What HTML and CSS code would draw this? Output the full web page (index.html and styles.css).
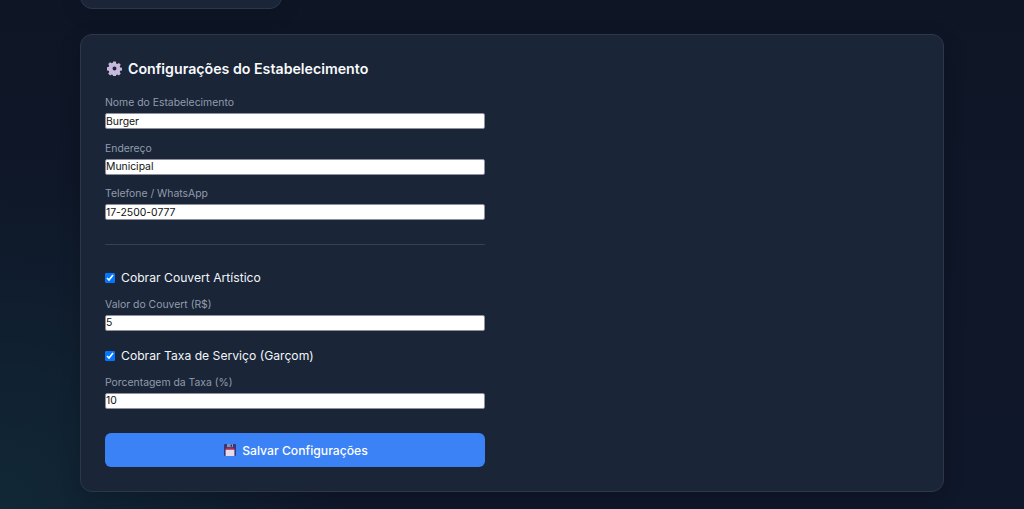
FILE: index.html
```html
<!DOCTYPE html>
<html lang="pt-BR">
<head>
    <meta charset="UTF-8">
    <meta name="viewport" content="width=device-width, initial-scale=1.0">
    <title>Configurações</title>
    <link rel="stylesheet" href="styles.css">
</head>
<body>
    <div class="container">
        <div class="card card-top"></div>

        <section class="card">
            <h2 class="card-title">
                <svg class="icon-gear" viewBox="0 0 16 16" aria-hidden="true">
                    <path fill-rule="evenodd" d="M6.6 0.6h2.8l0.4 2 1.2 0.5 1.7-1.1 2 2-1.1 1.7 0.5 1.2 2 0.4v2.8l-2 0.4-0.5 1.2 1.1 1.7-2 2-1.7-1.1-1.2 0.5-0.4 2H6.6l-0.4-2-1.2-0.5-1.7 1.1-2-2 1.1-1.7-0.5-1.2-2-0.4V6.6l2-0.4 0.5-1.2-1.1-1.7 2-2 1.7 1.1 1.2-0.5zM8 5.9a2.1 2.1 0 1 0 0 4.2 2.1 2.1 0 0 0 0-4.2z"/>
                </svg>
                Configurações do Estabelecimento
            </h2>

            <form class="settings-form">
                <div class="field">
                    <label>Nome do Estabelecimento</label>
                    <input type="text" value="Burger">
                </div>
                <div class="field">
                    <label>Endereço</label>
                    <input type="text" value="Municipal">
                </div>
                <div class="field">
                    <label>Telefone / WhatsApp</label>
                    <input type="text" value="17-2500-0777">
                </div>

                <hr class="divider">

                <label class="check-row">
                    <input type="checkbox" checked>
                    Cobrar Couvert Artístico
                </label>
                <div class="field">
                    <label>Valor do Couvert (R$)</label>
                    <input type="text" value="5">
                </div>

                <label class="check-row">
                    <input type="checkbox" checked>
                    Cobrar Taxa de Serviço (Garçom)
                </label>
                <div class="field">
                    <label>Porcentagem da Taxa (%)</label>
                    <input type="text" value="10">
                </div>

                <button type="button" class="save-button">
                    <svg class="icon-save" viewBox="0 0 12 12" aria-hidden="true">
                        <rect x="0" y="0" width="12" height="12" rx="1" fill="#3a3670"/>
                        <rect x="3" y="0" width="6" height="3.2" fill="#8f8cb8"/>
                        <rect x="6.6" y="0.6" width="1.4" height="2" fill="#2b2858"/>
                        <rect x="1.6" y="4.4" width="8.8" height="1.4" fill="#e0315a"/>
                        <rect x="1.6" y="5.8" width="8.8" height="6.2" fill="#e2dcec"/>
                    </svg>
                    Salvar Configurações
                </button>
            </form>
        </section>
    </div>
</body>
</html>
```

FILE: styles.css
```css
* {
    box-sizing: border-box;
}
html, body {
    height: 100%;
}
body {
    margin: 0;
    overflow: hidden;
    font-family: Inter, "Liberation Sans", sans-serif;
    color: #f8fafc;
    background-color: #0f172a;
    background-image:
        radial-gradient(circle at 0% 100%, rgba(20, 60, 70, 0.45), transparent 30%),
        linear-gradient(180deg, #0e1626 0%, #0f172a 100%);
}
.container {
    padding: 0 80px;
}
.card {
    background-color: #1a2537;
    border: 1px solid #2c3748;
    border-radius: 12px;
    padding: 24px;
    box-shadow: 0 4px 20px rgba(0, 0, 0, 0.2);
}
.card-top {
    width: 202px;
    height: 40px;
    padding: 0;
    margin-top: -31px;
    margin-bottom: 25px;
}
.card-title {
    display: flex;
    align-items: center;
    gap: 7px;
    margin: -1px 0 18px 2px;
    height: 20px;
    font-size: 14.2px;
    font-weight: 600;
}
.icon-gear {
    width: 15px;
    height: 15px;
    margin-right: -1px;
    fill: #c8b8dc;
}
.settings-form {
    width: 380px;
}
.field {
    margin-bottom: 12.5px;
}
.field label {
    display: block;
    margin-bottom: 4px;
    font-size: 10.4px;
    line-height: 13px;
    color: #919cae;
}
.field input {
    display: block;
    width: 100%;
    height: 16px;
    padding: 0;
    background: #fff;
    border: 1px solid #8f8f9d;
    border-radius: 2px;
    color: #111;
    font-family: Inter, sans-serif;
    font-size: 10.4px;
}
.divider {
    margin: 24px 0 24.5px;
    border: none;
    border-top: 1px solid #334155;
}
.check-row {
    display: flex;
    align-items: center;
    gap: 6px;
    margin-top: 17px;
    margin-bottom: 12px;
    font-size: 12.16px;
    line-height: 16px;
    color: #f1f5f9;
}
.check-row input {
    width: 10px;
    height: 10px;
    margin: 0;
    accent-color: #0075ff;
}
.save-button {
    display: flex;
    align-items: center;
    justify-content: center;
    gap: 6px;
    width: 100%;
    height: 34px;
    margin-top: 24.4px;
    padding: 1px 0 0 2px;
    background-color: #3b82f6;
    border: none;
    border-radius: 6px;
    color: #fff;
    font-family: Inter, sans-serif;
    font-size: 12.2px;
    font-weight: 500;
}
.icon-save {
    width: 12px;
    height: 12px;
}
```
